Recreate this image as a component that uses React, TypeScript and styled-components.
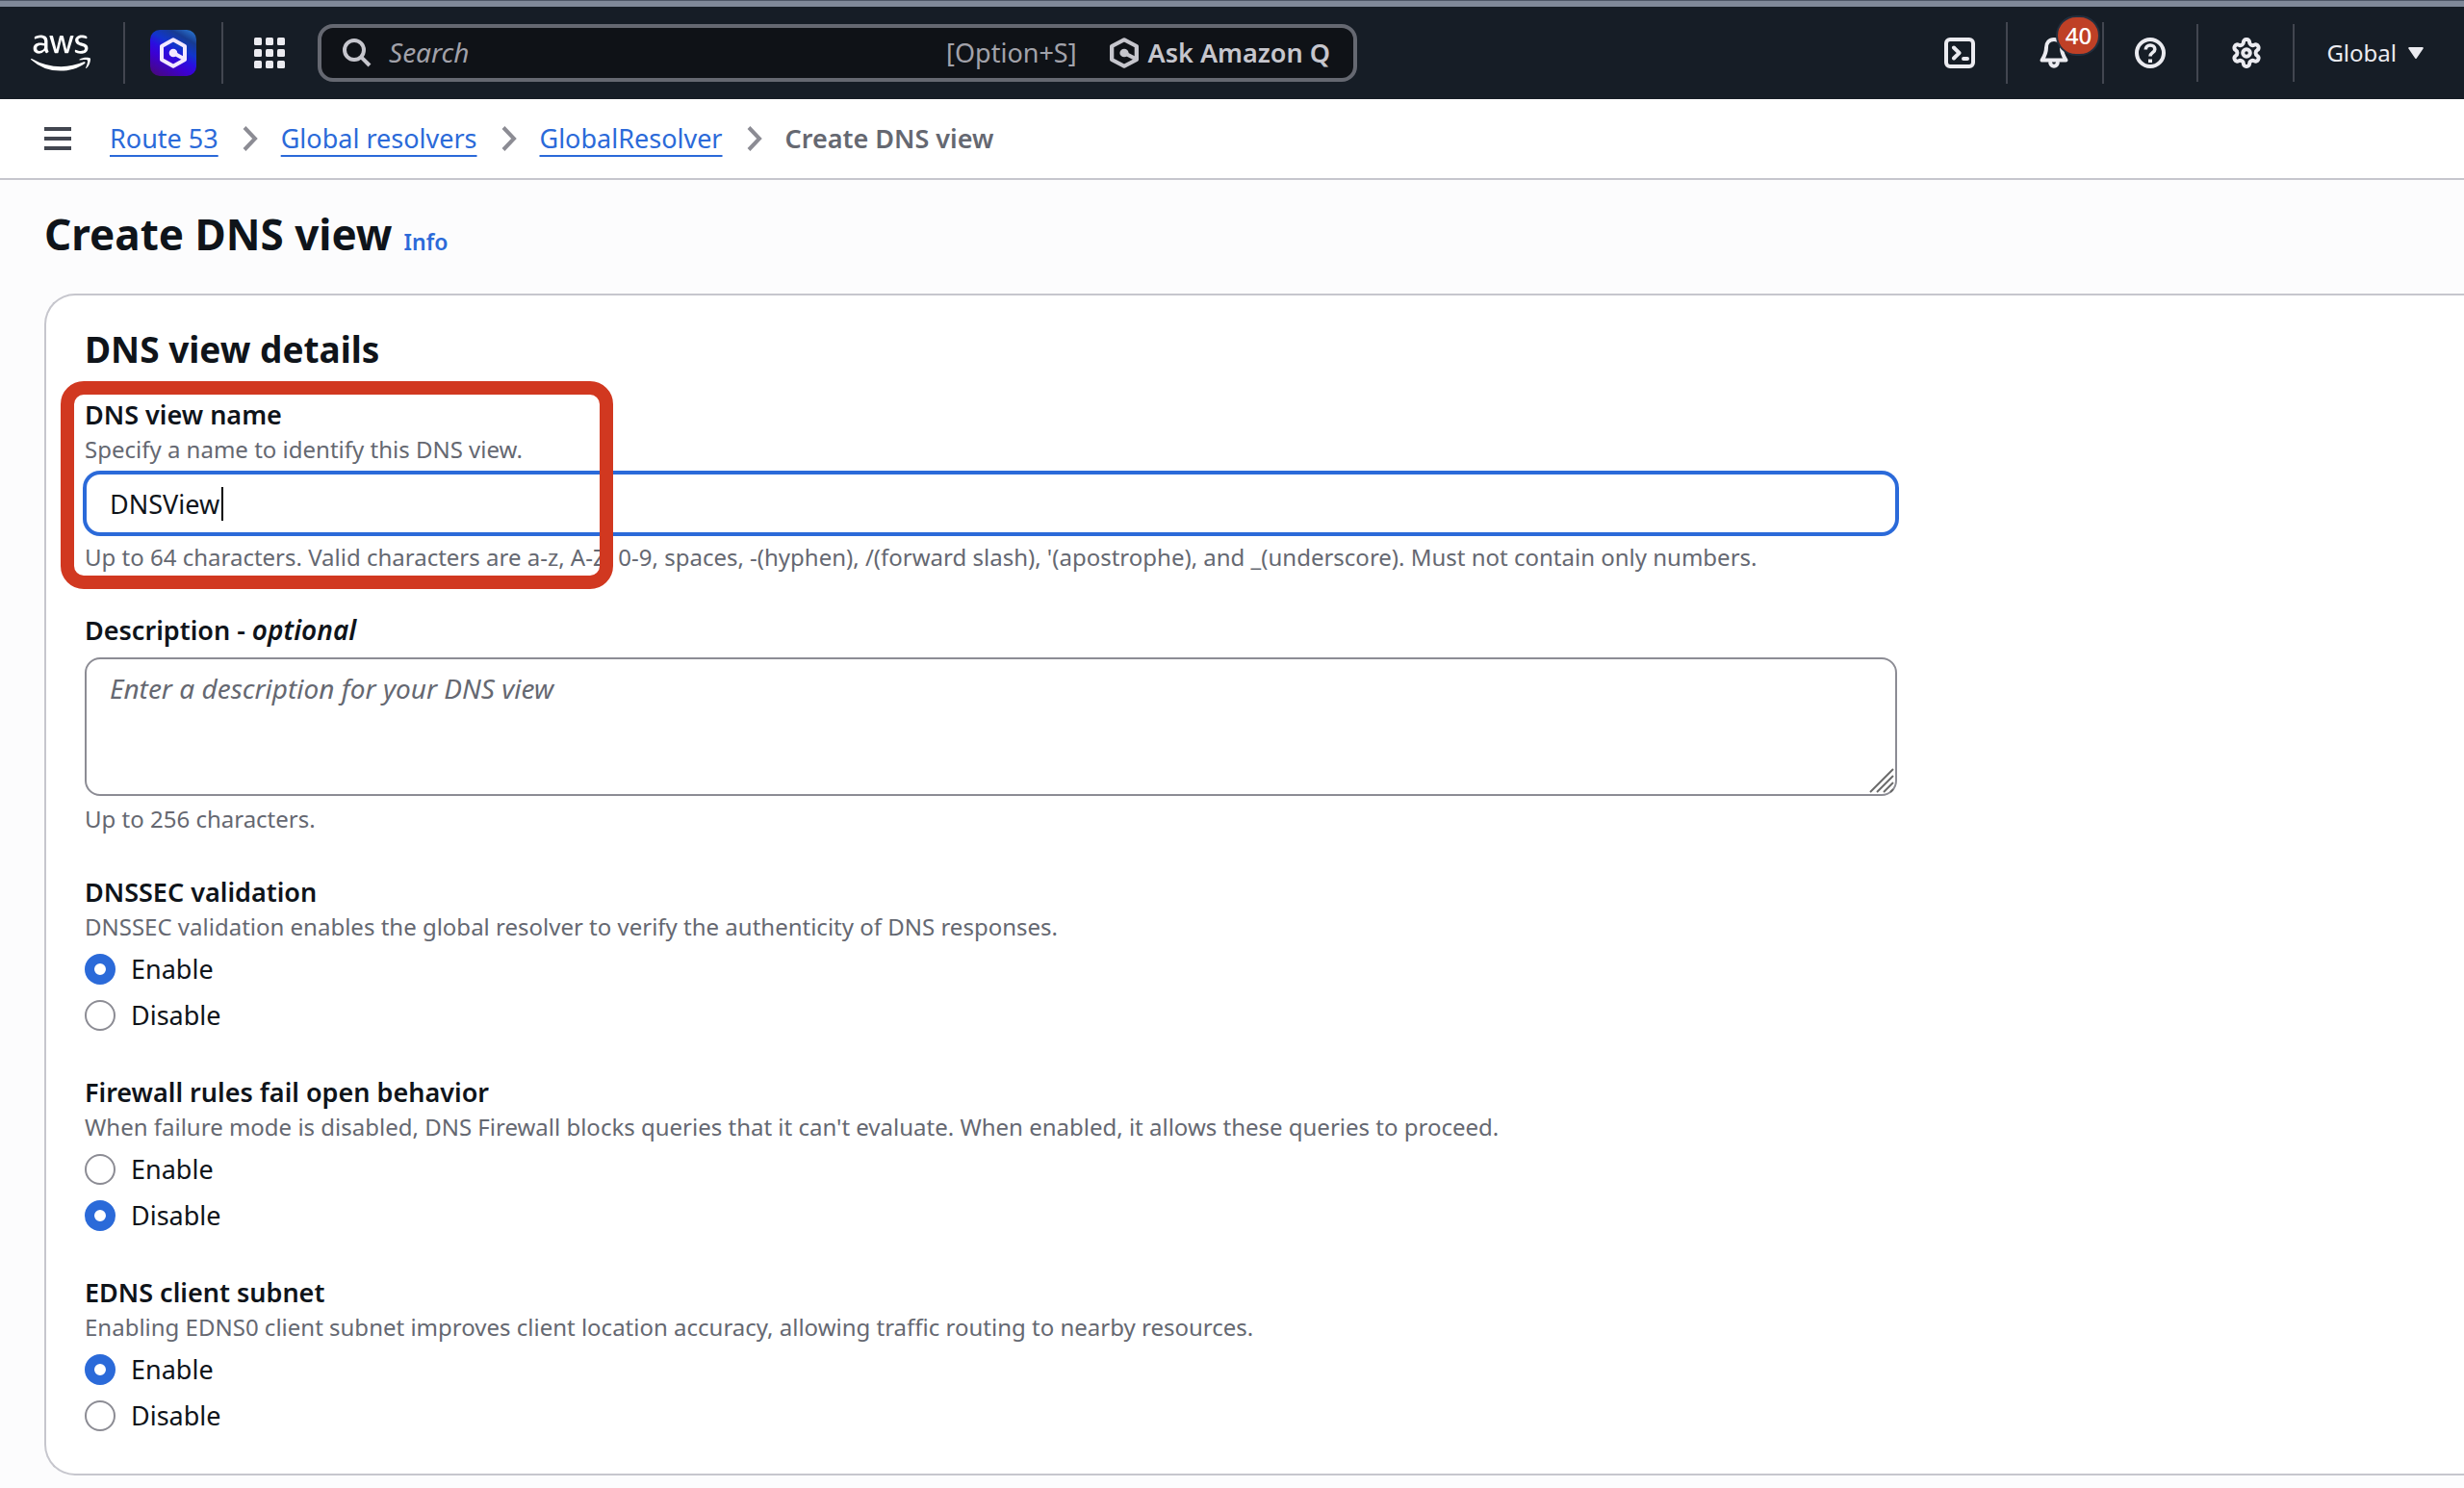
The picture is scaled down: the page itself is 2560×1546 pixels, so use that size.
import React, { useState } from 'react';
import styled, { createGlobalStyle, css } from 'styled-components';
import { FaAws } from 'react-icons/fa';

const color = {
  text: '#0f141a',
  muted: '#656871',
  link: '#2b6ad9',
  line: '#c6c6cd',
  control: '#8c8c94',
  nav: '#161d26',
  navText: '#ebebf0',
  navLine: '#424650',
};

const GlobalStyle = createGlobalStyle`
  *, *::before, *::after { box-sizing: border-box; }
  body {
    margin: 0;
    background: #fcfcfd;
    color: ${color.text};
    font-family: "Noto Sans", "Open Sans", sans-serif;
    font-size: 27px;
    line-height: 40px;
  }
  button, input, textarea { font: inherit; color: inherit; }
  button { background: none; border: 0; padding: 0; cursor: pointer; }
  svg { display: block; flex: none; }
`;

/* ---------- Top navigation ---------- */

const WindowEdge = styled.div`
  height: 7px;
  background: #808999;
  border-top: 1px solid #4e5767;
`;

const TopNav = styled.header`
  display: flex;
  align-items: center;
  height: 96px;
  background: ${color.nav};
  color: ${color.navText};
`;

const NavCell = styled.div<{ $pad: string; $divider?: boolean; $short?: boolean }>`
  display: flex;
  align-items: center;
  height: ${(p) => (p.$short ? 60 : 64)}px;
  padding: ${(p) => p.$pad};
  ${(p) => p.$divider && css`border-right: 2px solid ${color.navLine};`}
`;

const LogoLink = styled.a`
  display: block;
  color: #fff;
`;

const QBadge = styled.button`
  display: grid;
  place-items: center;
  width: 48px;
  height: 48px;
  border-radius: 10px;
  color: #f3e8ff;
  background: linear-gradient(
    30deg,
    #48087c 4%,
    #3c00d2 34%,
    #2a0ee0 48%,
    #1135cc 62%,
    #173c92 80%,
    #2f82dc 100%
  );
`;

const NavIconButton = styled.button`
  position: relative;
  display: block;
  color: ${color.navText};
`;

const CountBadge = styled.span`
  position: absolute;
  left: 18px;
  top: -23px;
  display: flex;
  align-items: center;
  justify-content: center;
  width: 46px;
  height: 42px;
  border: 2px solid #232f3e;
  border-radius: 21px;
  background: #bf4026;
  color: #fff;
  font-size: 24px;
  font-weight: 500;
  line-height: 32px;
`;

const SearchBox = styled.div`
  display: flex;
  align-items: center;
  flex: 0 1 1080px;
  height: 60px;
  padding: 0 24px 0 22px;
  border: 4px solid #656871;
  border-radius: 16px;
  background: #0f1217;
  color: #a2a2aa;
`;

const SearchInput = styled.input`
  flex: 1;
  min-width: 0;
  margin-left: 18px;
  padding: 0;
  border: 0;
  outline: 0;
  background: none;
  &::placeholder {
    color: inherit;
    font-size: 28px;
    font-style: italic;
    opacity: 1;
  }
`;

const AskButton = styled.button`
  display: flex;
  align-items: center;
  gap: 10px;
  margin-left: 34px;
  color: ${color.line};
  font-weight: 600;
`;

const NavEnd = styled.div`
  display: flex;
  align-items: center;
  margin-left: auto;
`;

const RegionButton = styled.button`
  display: flex;
  align-items: center;
  gap: 12px;
  font-size: 24px;
`;

/* ---------- Breadcrumbs ---------- */

const BreadcrumbBar = styled.div`
  display: flex;
  align-items: center;
  gap: 40px;
  height: 84px;
  padding: 0 46px;
  border-bottom: 2px solid ${color.line};
  background: #fff;
`;

const Crumbs = styled.ol`
  display: flex;
  align-items: center;
  margin: 0;
  padding: 0;
  list-style: none;
`;

const Crumb = styled.li`
  display: flex;
  align-items: center;
`;

const CrumbLink = styled.a`
  color: ${color.link};
  text-decoration: underline 2px;
  text-underline-offset: 7px;
`;

const CrumbChevron = styled.svg`
  margin: 0 24px 0 25px;
`;

const CurrentCrumb = styled.span`
  color: ${color.muted};
  font-weight: 600;
`;

/* ---------- Page ---------- */

const Main = styled.main`
  padding: 26px 0 13px 46px;
`;

const TitleRow = styled.div`
  display: flex;
  align-items: baseline;
  gap: 12px;
`;

const PageTitle = styled.h1`
  margin: 0;
  font-size: 44px;
  font-weight: 700;
  line-height: 60px;
`;

const InfoLink = styled.a`
  color: ${color.link};
  font-size: 23px;
  font-weight: 600;
  line-height: 32px;
  text-decoration: none;
`;

const Card = styled.section`
  margin-top: 32px;
  padding: 32px 40px 40px;
  border: 2px solid ${color.line};
  border-right: 0;
  border-radius: 32px 0 0 32px;
  background: #fff;
`;

const CardTitle = styled.h2`
  margin: 0 0 24px;
  font-size: 37px;
  font-weight: 700;
  line-height: 48px;
`;

const Form = styled.form`
  display: flex;
  flex-direction: column;
  gap: 40px;
  max-width: 1883px;
`;

const Field = styled.div`
  position: relative;
`;

const RadioFieldset = styled.fieldset`
  min-width: 0;
  margin: 0;
  padding: 0;
  border: 0;
`;

const labelText = css`
  display: block;
  padding: 0;
  font-weight: 600;
`;

const Label = styled.label`
  ${labelText}
`;

const Legend = styled.legend`
  ${labelText}
`;

const OptionalMark = styled.i`
  font-size: 28px;
  line-height: 32px;
`;

const Hint = styled.p`
  margin: 0;
  color: ${color.muted};
  font-size: 24px;
  line-height: 32px;
`;

const ControlWrap = styled.div`
  position: relative;
  margin: 8px 0;
`;

const controlBox = css`
  display: block;
  width: 100%;
  border: 2px solid ${color.control};
  border-radius: 16px;
  outline: 0;
  background: #fff;
`;

const TextInput = styled.input`
  ${controlBox}
  height: 64px;
  padding: 0 24px;
  border-color: ${color.link};
  box-shadow: 0 0 0 2px ${color.link};
`;

const TextArea = styled.textarea`
  ${controlBox}
  height: 144px;
  padding: 10px 24px;
  resize: none;
  &::placeholder {
    color: ${color.muted};
    font-size: 28px;
    font-style: italic;
    opacity: 1;
  }
`;

const Caret = styled.span`
  position: absolute;
  left: 142px;
  top: 15px;
  width: 2px;
  height: 35px;
  background: #000;
`;

const ResizeHandle = styled.svg`
  position: absolute;
  right: 3px;
  bottom: 3px;
`;

const RedFrame = styled.div`
  position: absolute;
  left: -25px;
  top: -15px;
  width: 574px;
  height: 216px;
  border: 14px solid #d13820;
  border-radius: 24px;
  pointer-events: none;
`;

const Options = styled.div`
  display: flex;
  flex-direction: column;
  gap: 8px;
  margin-top: 8px;
`;

const OptionLabel = styled.label`
  display: flex;
  align-items: center;
  gap: 16px;
`;

const Radio = styled.input`
  appearance: none;
  width: 32px;
  height: 32px;
  margin: 0;
  border: 2px solid ${color.control};
  border-radius: 50%;
  background: #fff;
  &:checked {
    border: 10px solid ${color.link};
  }
`;

/* ---------- Icons ---------- */

const QIcon = ({ width = 28 }: { width?: number }) => (
  <svg width={width} height="32" viewBox="2 0 28 32" preserveAspectRatio="none" fill="none" stroke="currentColor" strokeWidth="4" strokeLinejoin="round" aria-hidden="true">
    <path d="M16 2.3 28 9.1V22.9L16 29.7 4 22.9V9.1Z" />
    <path d="M16 16 27 22" />
    <circle cx="16" cy="16" r="4.3" fill="currentColor" stroke="none" />
  </svg>
);

const AppsIcon = () => (
  <svg width="32" height="32" viewBox="0 0 32 32" fill="currentColor" aria-hidden="true">
    {[0, 12, 24].map((y) =>
      [0, 12, 24].map((x) => <rect key={`${x}-${y}`} x={x} y={y} width="8" height="8" rx="1.5" />),
    )}
  </svg>
);

const SearchIcon = () => (
  <svg width="30" height="30" viewBox="0 0 30 30" fill="none" stroke={color.line} strokeWidth="4" aria-hidden="true">
    <circle cx="12" cy="12" r="10" />
    <path d="M18.8 18.8 28 28" />
  </svg>
);

const iconProps = {
  width: 32,
  height: 32,
  viewBox: '0 0 32 32',
  fill: 'none',
  stroke: 'currentColor',
  strokeWidth: 4,
  strokeLinecap: 'round' as const,
  strokeLinejoin: 'round' as const,
  'aria-hidden': true,
};

const TerminalIcon = () => (
  <svg {...iconProps}>
    <rect x="2" y="2" width="28" height="28" rx="4" />
    <path d="M10 10.5 15.5 16 10 21.5M20 22H24" />
  </svg>
);

const BellIcon = () => (
  <svg {...iconProps}>
    <path d="M16 2C11 2 8 5.5 8 10.5C8 16 6.5 19 3.5 23.5H28.5C25.5 19 24 16 24 10.5 24 5.5 21 2 16 2Z" />
    <path d="M12.2 26A3.8 3.8 0 0 0 19.8 26" />
  </svg>
);

const HelpIcon = () => (
  <svg {...iconProps}>
    <circle cx="16" cy="16" r="14" />
    <path d="M11.3 12.5C11.3 9.8 13.3 8 16 8 18.7 8 20.8 9.8 20.8 12.2 20.8 15.6 16 15.8 16 19.5" strokeWidth="3.6" strokeLinecap="butt" />
    <rect x="14" y="22.5" width="4" height="3.6" fill="currentColor" stroke="none" />
  </svg>
);

const GearIcon = () => (
  <svg {...iconProps} viewBox="0.57 0.57 22.86 22.86" strokeWidth="2.86">
    <path d="M12.22 2h-.44a2 2 0 0 0-2 2v.18a2 2 0 0 1-1 1.73l-.43.25a2 2 0 0 1-2 0l-.15-.08a2 2 0 0 0-2.73.73l-.22.38a2 2 0 0 0 .73 2.73l.15.1a2 2 0 0 1 1 1.72v.51a2 2 0 0 1-1 1.74l-.15.09a2 2 0 0 0-.73 2.73l.22.38a2 2 0 0 0 2.73.73l.15-.08a2 2 0 0 1 2 0l.43.25a2 2 0 0 1 1 1.73V20a2 2 0 0 0 2 2h.44a2 2 0 0 0 2-2v-.18a2 2 0 0 1 1-1.73l.43-.25a2 2 0 0 1 2 0l.15.08a2 2 0 0 0 2.73-.73l.22-.39a2 2 0 0 0-.73-2.73l-.15-.08a2 2 0 0 1-1-1.74v-.5a2 2 0 0 1 1-1.74l.15-.09a2 2 0 0 0 .73-2.73l-.22-.38a2 2 0 0 0-2.73-.73l-.15.08a2 2 0 0 1-2 0l-.43-.25a2 2 0 0 1-1-1.73V4a2 2 0 0 0-2-2z" />
    <circle cx="12" cy="12" r="2.7" />
  </svg>
);

const CaretDownIcon = () => (
  <svg width="16" height="12" viewBox="0 0 16 12" fill="currentColor" stroke="currentColor" strokeWidth="2" strokeLinejoin="round" aria-hidden="true">
    <path d="M1.2 1H14.8L8 11Z" />
  </svg>
);

const MenuIcon = () => (
  <svg width="28" height="24" viewBox="0 0 28 24" fill="#424650" aria-hidden="true">
    <path d="M0 0H28V4H0ZM0 10H28V14H0ZM0 20H28V24H0Z" />
  </svg>
);

const Chevron = () => (
  <CrumbChevron width="16" height="28" viewBox="0 0 16 28" fill="none" stroke={color.control} strokeWidth="4" aria-hidden="true">
    <path d="M2 2.5 13 14 2 25.5" />
  </CrumbChevron>
);

/* ---------- Radio group ---------- */

type Choice = 'Enable' | 'Disable';

function RadioGroup({ name, title, hint, initial }: { name: string; title: string; hint: string; initial: Choice }) {
  const [value, setValue] = useState<Choice>(initial);
  return (
    <RadioFieldset>
      <Legend>{title}</Legend>
      <Hint>{hint}</Hint>
      <Options>
        {(['Enable', 'Disable'] as Choice[]).map((choice) => (
          <OptionLabel key={choice}>
            <Radio type="radio" name={name} value={choice} checked={value === choice} onChange={() => setValue(choice)} />
            {choice}
          </OptionLabel>
        ))}
      </Options>
    </RadioFieldset>
  );
}

const parents = ['Route 53', 'Global resolvers', 'GlobalResolver'];

export default function App() {
  const [name, setName] = useState('DNSView');
  return (
    <>
      <GlobalStyle />
      <WindowEdge />
      <TopNav>
        <NavCell $pad="0 34px 0 32px" $divider>
          <LogoLink href="#" aria-label="AWS home">
            <FaAws size={62} />
          </LogoLink>
        </NavCell>
        <NavCell $pad="0 26px" $divider>
          <QBadge type="button" aria-label="Amazon Q">
            <QIcon />
          </QBadge>
        </NavCell>
        <NavCell $pad="0 34px 0 32px">
          <NavIconButton type="button" aria-label="Services">
            <AppsIcon />
          </NavIconButton>
        </NavCell>
        <SearchBox>
          <SearchIcon />
          <SearchInput type="text" placeholder="Search" aria-label="Search" />
          <span>[Option+S]</span>
          <AskButton type="button">
            <QIcon width={30} />
            Ask Amazon Q
          </AskButton>
        </SearchBox>
        <NavEnd>
          <NavCell $pad="0 32px" $divider>
            <NavIconButton type="button" aria-label="CloudShell">
              <TerminalIcon />
            </NavIconButton>
          </NavCell>
          <NavCell $pad="0 34px 0 32px" $divider>
            <NavIconButton type="button" aria-label="Notifications">
              <BellIcon />
              <CountBadge>40</CountBadge>
            </NavIconButton>
          </NavCell>
          <NavCell $pad="0 32px" $divider $short>
            <NavIconButton type="button" aria-label="Help">
              <HelpIcon />
            </NavIconButton>
          </NavCell>
          <NavCell $pad="0 32px 0 34px" $divider $short>
            <NavIconButton type="button" aria-label="Settings">
              <GearIcon />
            </NavIconButton>
          </NavCell>
          <NavCell $pad="0 42px 0 33px">
            <RegionButton type="button">
              Global
              <CaretDownIcon />
            </RegionButton>
          </NavCell>
        </NavEnd>
      </TopNav>

      <BreadcrumbBar>
        <button type="button" aria-label="Open navigation">
          <MenuIcon />
        </button>
        <nav aria-label="Breadcrumbs">
          <Crumbs>
            {parents.map((item) => (
              <Crumb key={item}>
                <CrumbLink href="#">{item}</CrumbLink>
                <Chevron />
              </Crumb>
            ))}
            <Crumb>
              <CurrentCrumb aria-current="page">Create DNS view</CurrentCrumb>
            </Crumb>
          </Crumbs>
        </nav>
      </BreadcrumbBar>

      <Main>
        <TitleRow>
          <PageTitle>Create DNS view</PageTitle>
          <InfoLink href="#">Info</InfoLink>
        </TitleRow>

        <Card>
          <CardTitle>DNS view details</CardTitle>
          <Form>
            <Field>
              <Label htmlFor="view-name">DNS view name</Label>
              <Hint>Specify a name to identify this DNS view.</Hint>
              <ControlWrap>
                <TextInput id="view-name" type="text" value={name} onChange={(e) => setName(e.target.value)} />
                <Caret />
              </ControlWrap>
              <Hint>
                Up to 64 characters. Valid characters are a-z, A-Z, 0-9, spaces, -(hyphen), /(forward slash), '(apostrophe), and
                _(underscore). Must not contain only numbers.
              </Hint>
              <RedFrame />
            </Field>

            <Field>
              <Label htmlFor="view-description">
                Description - <OptionalMark>optional</OptionalMark>
              </Label>
              <ControlWrap>
                <TextArea id="view-description" placeholder="Enter a description for your DNS view" />
                <ResizeHandle width="26" height="26" viewBox="0 0 26 26" stroke="#6b6b6b" strokeWidth="2" aria-hidden="true">
                  <path d="M1 25 25 1M8 25 25 8M15 25 25 15M22 25 25 22" />
                </ResizeHandle>
              </ControlWrap>
              <Hint>Up to 256 characters.</Hint>
            </Field>

            <RadioGroup
              name="dnssec"
              title="DNSSEC validation"
              hint="DNSSEC validation enables the global resolver to verify the authenticity of DNS responses."
              initial="Enable"
            />
            <RadioGroup
              name="firewall"
              title="Firewall rules fail open behavior"
              hint="When failure mode is disabled, DNS Firewall blocks queries that it can't evaluate. When enabled, it allows these queries to proceed."
              initial="Disable"
            />
            <RadioGroup
              name="edns"
              title="EDNS client subnet"
              hint="Enabling EDNS0 client subnet improves client location accuracy, allowing traffic routing to nearby resources."
              initial="Enable"
            />
          </Form>
        </Card>
      </Main>
    </>
  );
}
